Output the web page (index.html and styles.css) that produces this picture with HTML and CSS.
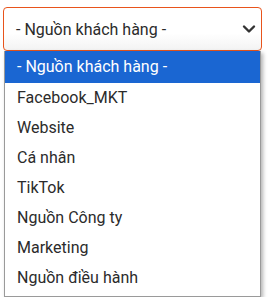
FILE: index.html
```html
<!DOCTYPE html>
<html lang="vi">
<head>
    <meta charset="UTF-8">
    <meta name="viewport" content="width=device-width, initial-scale=1.0">
    <title>Nguồn khách hàng</title>
    <link rel="stylesheet" href="styles.css">
</head>
<body>
    <div class="select-wrap">
        <div class="select-box">
            <span class="select-value">- Nguồn khách hàng -</span>
            <svg class="chevron" width="14" height="10" viewBox="0 0 14 10">
                <path d="M2 2.5 L7 7.5 L12 2.5" fill="none" stroke="#333" stroke-width="2.4" stroke-linecap="round" stroke-linejoin="round"/>
            </svg>
        </div>
        <ul class="select-list">
            <li class="active">- Nguồn khách hàng -</li>
            <li>Facebook_MKT</li>
            <li>Website</li>
            <li>Cá nhân</li>
            <li>TikTok</li>
            <li>Nguồn Công ty</li>
            <li>Marketing</li>
            <li>Nguồn điều hành</li>
        </ul>
    </div>
</body>
</html>
```

FILE: styles.css
```css
body {
    font-family: Roboto, "Noto Sans", Arial, sans-serif;
    margin: 0;
    padding: 0;
    background-color: #fff;
}

/* Select */
.select-wrap {
    padding: 7px 8px 0 3px;
}

.select-box {
    display: flex;
    align-items: center;
    justify-content: space-between;
    height: 42px;
    padding: 0 5px 0 12px;
    border: 1px solid #e8541c;
    border-radius: 4px;
    background: linear-gradient(#fff 60%, #f3f3f3);
    color: #2b2b2b;
    font-size: 16px;
}

.chevron {
    display: block;
}

/* Dropdown list */
.select-list {
    list-style: none;
    margin: 0 0 0 1px;
    padding: 0 0 3px;
    width: 255px;
    border: 1px solid #9a9a9a;
    border-top: none;
    background-color: #fff;
    box-shadow: 2px 2px 4px rgba(0, 0, 0, 0.3);
}

.select-list li {
    height: 30px;
    line-height: 30px;
    padding-left: 12px;
    font-size: 16px;
    color: #2b2b2b;
}

.select-list li.active {
    height: 32px;
    line-height: 32px;
    background-color: #1a66d2;
    color: #fff;
}
```
